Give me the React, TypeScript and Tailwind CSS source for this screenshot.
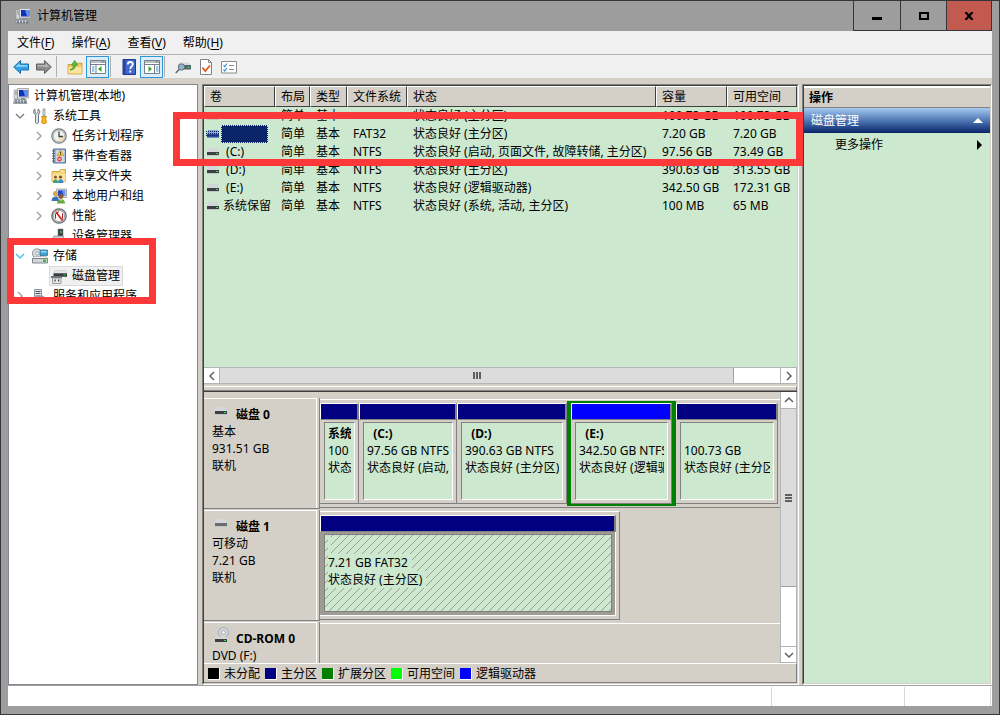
import { ReactNode } from "react";

type IconProps = {
  className?: string;
};

const ComputerIcon = ({ className = "w-4 h-4" }: IconProps) => (
  <svg viewBox="0 0 16 16" className={className} aria-hidden="true">
    <path d="M1 2h4v9H1z" fill="#d5d8dc" stroke="#8d949c" strokeWidth=".6" />
    <path d="M2 4h2M2 6h2" stroke="#6e757d" strokeWidth=".8" />
    <path d="M4.500 .5h11v9.500h-11z" fill="#e4e2dc" stroke="#9a9a94" strokeWidth=".8" />
    <path d="M6 2h8.500v6.500H6z" fill="#1330b8" />
    <path d="M10 2h4.500v6.500H12z" fill="#5d8df0" />
    <path d="M8 10h4v1.500H8z" fill="#8a8d90" />
    <path d="M1.500 11.500h11.500l1 4H.5z" fill="#c7ccd2" stroke="#7d858e" strokeWidth=".7" />
    <path d="M2 13h11M2 14.500h11" stroke="#56606a" strokeWidth=".9" strokeDasharray="2 1" />
  </svg>
);

const ToolsIcon = ({ className = "w-4 h-4" }: IconProps) => (
  <svg viewBox="0 0 16 16" className={className} aria-hidden="true">
    <path d="M3 1v3.500l1.500 1 1.500-1V1c1.500.8 2 2 1.700 3.500L6.500 7v7.500c-.5 1.200-2.500 1.200-3 0V7L1.700 4.800C1.300 3 1.800 1.700 3 1z" fill="#dfe3e6" stroke="#626a72" strokeWidth=".9" />
    <path d="M11 1h2v7h-2z" fill="#d9dde0" stroke="#7e868d" strokeWidth=".7" />
    <path d="M9.500 8.500h5l-.8 2 .8 4c-.8 1.500-4.200 1.500-5 0l.8-4z" fill="#f8b41c" stroke="#c9820a" strokeWidth=".8" />
  </svg>
);

const ClockIcon = ({ className = "w-4 h-4" }: IconProps) => (
  <svg viewBox="0 0 16 16" className={className} aria-hidden="true">
    <circle cx="8" cy="8" r="7.200" fill="#c9cdd0" stroke="#7b8185" strokeWidth="1.200" />
    <circle cx="8" cy="8" r="5.600" fill="#f3f3ee" stroke="#a7abad" strokeWidth=".6" />
    <path d="M8 8h5.500A5.500 5.500 0 0 1 8 13.500z" fill="#f1dfae" />
    <path d="M8 3.500V8.500h4" fill="none" stroke="#40464b" strokeWidth="1.300" />
  </svg>
);

const EventIcon = ({ className = "w-4 h-4" }: IconProps) => (
  <svg viewBox="0 0 16 16" className={className} aria-hidden="true">
    <path d="M2.500 1h12v14h-12z" fill="#9db4d8" stroke="#4b648f" strokeWidth=".9" />
    <path d="M5 2h8.500v12H5z" fill="#c9d7ea" />
    <path d="M1 3h3M1 5.500h3M1 8h3M1 10.500h3M1 13h3" stroke="#58636f" />
    <path d="M9.500 2l3.300 5.500H6.200z" fill="#ffd21e" stroke="#bb8c00" strokeWidth=".6" />
    <path d="M9.500 3.800v2M9.500 6.300v.7" stroke="#333" strokeWidth=".9" />
    <circle cx="8.500" cy="11" r="2.700" fill="#db3a2d" stroke="#fff" strokeWidth=".5" />
    <path d="M7.500 10l2 2M9.500 10l-2 2" stroke="#fff" strokeWidth=".8" />
  </svg>
);

const SharedFolderIcon = ({ className = "w-4 h-4" }: IconProps) => (
  <svg viewBox="0 0 16 16" className={className} aria-hidden="true">
    <path d="M1 3.500h7l1.500-2h5v12H1z" fill="#f1cf6a" stroke="#c39a34" strokeWidth=".8" />
    <path d="M9.500 3h4" stroke="#fff6cf" />
    <path d="M1.500 5.500h13v8h-13z" fill="#fae39a" />
    <circle cx="4.500" cy="9" r="1.600" fill="#8a5a33" />
    <path d="M2 15c0-5 5-5 5 0z" fill="#3aa17b" />
    <circle cx="9.500" cy="9" r="1.600" fill="#7a4d2b" />
    <path d="M7 15c0-5 5.500-5 5.500 0z" fill="#3b87c8" />
  </svg>
);

const UsersIcon = ({ className = "w-4 h-4" }: IconProps) => (
  <svg viewBox="0 0 16 16" className={className} aria-hidden="true">
    <path d="M5.500 1h10v8.500h-10z" fill="#dedfe0" stroke="#8f9498" strokeWidth=".7" />
    <path d="M7 2.300h7.200v5.700H7z" fill="#2348cf" />
    <path d="M11 2.300h3.200v5.700h-1.500z" fill="#6f9cf3" />
    <circle cx="4.500" cy="5.500" r="2.600" fill="#d9a94a" />
    <path d="M.5 13c0-6 7.500-6 7.500 0z" fill="#3c73b9" />
    <circle cx="10" cy="8.500" r="2.400" fill="#8a5c35" />
    <path d="M6 15.500c0-6 8-6 8 0z" fill="#69a743" />
    <path d="M9.200 11.300l.9 2 .9-2z" fill="#fff" />
  </svg>
);

const PerformanceIcon = ({ className = "w-4 h-4" }: IconProps) => (
  <svg viewBox="0 0 16 16" className={className} aria-hidden="true">
    <circle cx="8" cy="8" r="7.200" fill="#bfc3c5" stroke="#65696c" strokeWidth="1.200" />
    <circle cx="8" cy="8" r="5.500" fill="#fff" stroke="#8b8f92" strokeWidth=".7" />
    <path d="M4.500 10.500V6L8 3.500M11.500 5.500v5" stroke="#9b2020" fill="none" />
    <path d="M5 4l6.500 8.500" stroke="#d8201b" strokeWidth="1.700" />
  </svg>
);

const DeviceIcon = ({ className = "w-4 h-4" }: IconProps) => (
  <svg viewBox="0 0 16 16" className={className} aria-hidden="true">
    <path d="M7 1h5v8H7z" fill="#3d4145" stroke="#777c80" strokeWidth=".6" />
    <path d="M9 3h1.500v2H9z" fill="#45d245" />
    <path d="M3 8h9l2 4H1z" fill="#cbd0d4" stroke="#7c8388" strokeWidth=".7" />
    <path d="M1 12h13v2.500H1z" fill="#5d6368" />
  </svg>
);

const StorageIcon = ({ className = "w-4 h-4" }: IconProps) => (
  <svg viewBox="0 0 16 16" className={className} aria-hidden="true">
    <circle cx="5" cy="5.500" r="4.700" fill="#d4dade" stroke="#7c8489" strokeWidth=".8" />
    <circle cx="5" cy="5.500" r="1.500" fill="#fff" stroke="#858d91" strokeWidth=".7" />
    <path d="M8 2h7.500v5.500H8z" fill="#3f9fcd" stroke="#286f95" strokeWidth=".7" />
    <path d="M9 3h5.500v1.500H9z" fill="#9bdcf5" />
    <path d="M2 8.500h12.500l1 2H.7z" fill="#f1f3f4" stroke="#90979c" strokeWidth=".5" />
    <path d="M.5 10.500h15v4.500H.5z" fill="#d3d6d9" stroke="#6b7176" strokeWidth=".8" />
    <path d="M11 11.500h3v2.500h-3z" fill="#26cc2c" />
  </svg>
);

const DiskManageIcon = ({ className = "w-4 h-4" }: IconProps) => (
  <svg viewBox="0 0 16 16" className={className} aria-hidden="true">
    <path d="M4 2.500h11l1 3H2.500z" fill="#e2e4e6" stroke="#aeb2b5" strokeWidth=".4" />
    <path d="M2.500 5.300H16v3.500H2.500z" fill="#383c3f" />
    <path d="M12.500 6.500h2v1h-2z" fill="#36dc45" />
    <path d="M0 8h11v2H0z" fill="#6d7276" />
    <path d="M1.500 10h8.500v5.500H1.500z" fill="#e7e9ea" stroke="#84898d" strokeWidth=".8" />
    <path d="M3.500 11.500h1.200v2H3.500zM7 11.500h1.200v2H7z" fill="#35393c" />
  </svg>
);

const ServicesIcon = ({ className = "w-4 h-4" }: IconProps) => (
  <svg viewBox="0 0 16 16" className={className} aria-hidden="true">
    <path d="M2.500 1.500h7v13h-7z" fill="#dfe3e7" stroke="#79838c" strokeWidth=".8" />
    <path d="M3.500 3.500h5M3.500 5.500h5M3.500 8h5" stroke="#4f5c68" />
    <circle cx="10" cy="11" r="3" fill="#a9b7c4" stroke="#5f6f7e" strokeDasharray="1 1" />
    <circle cx="13" cy="13" r="2" fill="#8fa1b1" stroke="#54636f" strokeDasharray="1 1" />
  </svg>
);

type DriveProps = {
  light?: boolean;
  selected?: boolean;
};

const DriveIcon = ({ light = true, selected = false }: DriveProps) => (
  <svg viewBox="0 0 14 8" className="w-[14px] h-2 shrink-0" aria-hidden="true">
    <path d="M2 0h10l1 4H1z" fill={selected ? "#8ea7d0" : "#d3d6da"} />
    <path d="M1 4h12v3H1z" fill={selected ? "#28498f" : light ? "#3c4043" : "#6a6d70"} />
    <path d="M1 7h12v1H1z" fill={selected ? "#7590c4" : "#c2c5c7"} />
    {light && !selected && <path d="M10 5h2v1h-2z" fill="#2ee63f" />}
    {selected && <path d="M0 1.500h14M0 3.500h14M0 5.500h14" stroke="#0a246a" strokeDasharray="1 1" />}
  </svg>
);

const CdIcon = () => (
  <svg viewBox="0 0 16 16" className="w-4 h-4 shrink-0" aria-hidden="true">
    <circle cx="9.500" cy="5.500" r="5" fill="#d4d7d9" stroke="#989ea1" strokeWidth=".8" />
    <circle cx="9.500" cy="5.500" r="2" fill="#f3f3f3" stroke="#9ba0a3" strokeWidth=".8" />
    <path d="M2.500 9.500H12l1 2.500H1z" fill="#d4d6d8" />
    <path d="M1 12h12v3H1z" fill="#3c4043" />
    <path d="M10 13h2v1h-2z" fill="#2ee63f" />
  </svg>
);

type ChevronProps = {
  direction: "up" | "down" | "left" | "right";
  className?: string;
};

const Chevron = ({ direction, className = "text-[#606060]" }: ChevronProps) => {
  const paths = {
    up: "M1 7l4-4 4 4",
    down: "M1 3l4 4 4-4",
    left: "M7 1L3 5l4 4",
    right: "M3 1l4 4-4 4",
  };

  return (
    <svg viewBox="0 0 10 10" className={`w-[10px] h-[10px] ${className}`} aria-hidden="true">
      <path d={paths[direction]} fill="none" stroke="currentColor" strokeWidth="1.500" />
    </svg>
  );
};

type TreeNode = {
  label: string;
  icon: ReactNode;
  level: number;
  state?: "open" | "closed";
  highlight?: boolean;
  selected?: boolean;
};

const treeNodes: TreeNode[] = [
  { label: "系统工具", icon: <ToolsIcon />, level: 0, state: "open" },
  { label: "任务计划程序", icon: <ClockIcon />, level: 1, state: "closed" },
  { label: "事件查看器", icon: <EventIcon />, level: 1, state: "closed" },
  { label: "共享文件夹", icon: <SharedFolderIcon />, level: 1, state: "closed" },
  { label: "本地用户和组", icon: <UsersIcon />, level: 1, state: "closed" },
  { label: "性能", icon: <PerformanceIcon />, level: 1, state: "closed" },
  { label: "设备管理器", icon: <DeviceIcon />, level: 1 },
  { label: "存储", icon: <StorageIcon />, level: 0, state: "open", highlight: true },
  { label: "磁盘管理", icon: <DiskManageIcon />, level: 1, selected: true },
  { label: "服务和应用程序", icon: <ServicesIcon />, level: 0, state: "closed" },
];

const volumes = [
  { name: "", fs: "", status: "状态良好 (主分区)", size: "100.73 GB", free: "100.73 GB" },
  { name: "", fs: "FAT32", status: "状态良好 (主分区)", size: "7.20 GB", free: "7.20 GB", selected: true },
  { name: "\u00a0(C:)", fs: "NTFS", status: "状态良好 (启动, 页面文件, 故障转储, 主分区)", size: "97.56 GB", free: "73.49 GB" },
  { name: "\u00a0(D:)", fs: "NTFS", status: "状态良好 (主分区)", size: "390.63 GB", free: "313.55 GB" },
  { name: "\u00a0(E:)", fs: "NTFS", status: "状态良好 (逻辑驱动器)", size: "342.50 GB", free: "172.31 GB" },
  { name: "系统保留", fs: "NTFS", status: "状态良好 (系统, 活动, 主分区)", size: "100 MB", free: "65 MB" },
];

const columns = [
  { label: "卷", width: "w-[71px]" },
  { label: "布局", width: "w-[35px]" },
  { label: "类型", width: "w-[37px]" },
  { label: "文件系统", width: "w-[60px]" },
  { label: "状态", width: "" },
  { label: "容量", width: "w-[71px]" },
  { label: "可用空间", width: "w-[70px]" },
];

const legend = [
  { label: "未分配", color: "bg-black" },
  { label: "主分区", color: "bg-[#000080]" },
  { label: "扩展分区", color: "bg-[#008000]" },
  { label: "可用空间", color: "bg-[#00ff00]" },
  { label: "逻辑驱动器", color: "bg-[#0000ff]" },
];

const TitleBar = () => (
  <header className="flex h-[30px] shrink-0 items-stretch pl-[14px]">
    <div className="flex flex-1 items-center gap-[6px]">
      <ComputerIcon />
      <h1>计算机管理</h1>
    </div>
    <div className="mr-[7px] flex border-b border-[#36363a]">
      <button type="button" aria-label="最小化" className="flex w-[47px] items-center justify-center border-l border-[#36363a]">
        <span className="mt-[5px] h-[3px] w-[10px] bg-black" />
      </button>
      <button type="button" aria-label="最大化" className="flex w-[46px] items-center justify-center border-l border-[#36363a]">
        <span className="h-2 w-[10px] border-2 border-black" />
      </button>
      <button type="button" aria-label="关闭" className="flex w-[46px] items-center justify-center border-x border-[#36363a] bg-[#c35a4f]">
        <svg viewBox="0 0 10 8" className="h-2 w-[10px]" aria-hidden="true">
          <path d="M1.500 0l7 8M8.500 0l-7 8" stroke="#000" strokeWidth="2.200" />
        </svg>
      </button>
    </div>
  </header>
);

const MenuBar = () => {
  const menus = [
    { label: "文件", key: "F" },
    { label: "操作", key: "A" },
    { label: "查看", key: "V" },
    { label: "帮助", key: "H" },
  ];

  return (
    <nav className="flex h-6 shrink-0 items-center gap-[17px] border-b border-[#b4b4b4] bg-[#f0f0f0] pl-[9px]">
      {menus.map((menu) => (
        <button key={menu.key} type="button">
          {menu.label}(<u className="underline-offset-2">{menu.key}</u>)
        </button>
      ))}
    </nav>
  );
};

type ToolButtonProps = {
  label: string;
  active?: boolean;
  children: ReactNode;
};

const ToolButton = ({ label, active = false, children }: ToolButtonProps) => (
  <button
    type="button"
    aria-label={label}
    className={`flex h-[22px] w-[23px] items-center justify-center border ${active ? "border-[#3096d6] bg-[#dcecf8]" : "border-transparent"}`}
  >
    <svg viewBox="0 0 16 16" className="h-4 w-4 shrink-0" aria-hidden="true">{children}</svg>
  </button>
);

const ToolSeparator = () => <span className="ml-px h-[21px] w-[7px] border-l border-[#b0b0b0]" />;

const ToolBar = () => (
  <div className="flex h-[23px] shrink-0 items-center bg-[#f0f0f0] pl-px">
    <ToolButton label="后退">
      <path d="M.7 8L7.500 1.500V5h8v6h-8v3.500z" fill="#2fa3e6" stroke="#1b6da8" />
      <path d="M2.500 8L6.500 4v2h8v1.500z" fill="#8fd5fa" />
    </ToolButton>
    <ToolButton label="前进">
      <path d="M15.300 8L8.500 1.500V5h-8v6h8v3.500z" fill="#8c8c8c" stroke="#5f5f5f" />
      <path d="M13.500 8L9.500 4v2h-8v1.500z" fill="#b5b5b5" />
    </ToolButton>
    <ToolSeparator />
    <ToolButton label="向上">
      <path d="M1 5.500h8.500l1-1.500h4.500v11H1z" fill="#efc762" stroke="#c79a36" strokeWidth=".8" />
      <path d="M1.500 8h13v6.500h-13z" fill="#fbe39b" />
      <path d="M3 11c4 0 5.500-2.500 5.500-5h2L7.800 1.500 4.500 6h2c0 2-1 4-3.500 5z" fill="#56c53a" stroke="#2d8c1c" strokeWidth=".7" />
    </ToolButton>
    <ToolButton label="显示/隐藏控制台树" active>
      <path d="M.5 1.500h15v13H.5z" fill="#fff" stroke="#74808c" />
      <path d="M1 3h14M1 5.500h14" stroke="#74808c" />
      <path d="M6 6v8M11.500 3h3" stroke="#74808c" />
      <path d="M2 8h2.500M2 10h2.500M2 12h2.500" stroke="#4b8ed4" />
      <path d="M11.500 7v6L8 10z" fill="#3aa52a" />
    </ToolButton>
    <ToolSeparator />
    <ToolButton label="帮助">
      <path d="M2 .5h12.500v15H2z" fill="#4169cd" stroke="#20398a" />
      <path d="M2 1h2.500v14H2z" fill="#284496" />
      <path d="M6.800 5.500c0-3.400 5-3.200 5-.3 0 2-2.500 2.200-2.500 4.800M9.300 11.500v2" fill="none" stroke="#fff" strokeWidth="1.800" />
    </ToolButton>
    <ToolButton label="显示/隐藏操作窗格" active>
      <path d="M.5 1.500h15v13H.5z" fill="#fff" stroke="#74808c" />
      <path d="M1 3h14M1 5.500h14" stroke="#74808c" />
      <path d="M10.500 6v8M11.500 3h3" stroke="#74808c" />
      <path d="M12 8h2.500M12 10h2.500M12 12h2.500" stroke="#4b8ed4" />
      <path d="M4.500 7v6L8 10z" fill="#3aa52a" />
    </ToolButton>
    <ToolSeparator />
    <ToolButton label="磁盘属性">
      <path d="M4 3.500h10l1.500 2.500H3z" fill="#d8dadd" />
      <path d="M4 6h12v4.500H5z" fill="#53636e" />
      <path d="M12.500 7.500h2V9h-2z" fill="#22e235" />
      <circle cx="6.500" cy="8" r="3.200" fill="#8fb5ca" stroke="#5f6f7a" />
      <path d="M4 10.500L.8 14" stroke="#66737d" strokeWidth="1.800" />
    </ToolButton>
    <ToolButton label="检查">
      <path d="M2.500.5h8l3 3v12h-11z" fill="#fff" stroke="#828282" />
      <path d="M10.500.5v3h3" fill="none" stroke="#828282" />
      <path d="M4.500 8.500l2.800 3.500L12 6.500" fill="none" stroke="#e85520" strokeWidth="1.800" />
    </ToolButton>
    <ToolButton label="列表">
      <path d="M.5 2.500h15v11.500H.5z" fill="#fff" stroke="#8a8a8a" />
      <path d="M2.500 6l1.200 1.500L6 4.500M2.500 10.500L3.700 12 6 9" fill="none" stroke="#3589d6" strokeWidth="1.200" />
      <path d="M8 6.500h5M8 10.500h5" stroke="#8a8a8a" />
    </ToolButton>
  </div>
);

const ConsoleTree = () => (
  <aside className="w-[190px] shrink-0 overflow-hidden border border-[#828790] bg-white">
    <ul className="pt-px">
      <li className="flex h-5 items-center gap-[5px] pl-1">
        <ComputerIcon />
        <span>计算机管理(本地)</span>
      </li>
      {treeNodes.map((node) => (
        <li key={node.label} className={`flex h-5 items-center ${node.level === 0 ? "pl-[6px]" : "pl-[25px]"}`}>
          <span className="flex w-[15px] items-center">
            {node.state && (
              <button type="button" aria-label={node.label}>
                <Chevron
                  direction={node.state === "open" ? "down" : "right"}
                  className={node.highlight ? "text-[#4cc4f0]" : node.state === "open" ? "text-[#808080]" : "text-[#a6a6a6]"}
                />
              </button>
            )}
          </span>
          <span
            className={`flex h-5 items-center gap-[5px] border pr-[2px] pl-px ${node.selected ? "border-[#d9d9d9] bg-[#f0f0f0]" : "border-transparent"}`}
          >
            {node.icon}
            <span>{node.label}</span>
          </span>
        </li>
      ))}
    </ul>
  </aside>
);

const VolumeTable = () => (
  <div className="min-h-0 flex-1 overflow-hidden bg-[#cce8cf]">
    <table className="w-full table-fixed border-separate border-spacing-0">
      <thead>
        <tr>
          {columns.map((column) => (
            <th
              key={column.label}
              className={`h-[21px] border-t border-r border-b border-l border-t-white border-r-[#404040] border-b-[#404040] border-l-white bg-[#d4d0c8] p-0 pl-[5px] text-left font-normal whitespace-nowrap ${column.width}`}
            >
              {column.label}
            </th>
          ))}
        </tr>
      </thead>
      <tbody className="whitespace-nowrap">
        {volumes.map((volume, index) => (
          <tr key={index} className="h-[18px]">
            <td className="p-0 pl-[2px]">
              <span className="flex h-[18px] items-center gap-px">
                <DriveIcon selected={volume.selected} />
                {volume.selected ? (
                  <span className="h-[18px] w-[47px] border border-dotted border-[#f5db95] bg-[#0a246a]" />
                ) : (
                  <span className="pl-[2px]">{volume.name}</span>
                )}
              </span>
            </td>
            <td className="p-0 pl-[6px]">简单</td>
            <td className="p-0 pl-[6px]">基本</td>
            <td className="p-0 pl-[6px]">{volume.fs}</td>
            <td className="overflow-hidden p-0 pl-[6px]">{volume.status}</td>
            <td className="p-0 pl-[6px]">{volume.size}</td>
            <td className="p-0 pl-[6px]">{volume.free}</td>
          </tr>
        ))}
      </tbody>
    </table>
  </div>
);

const HorizontalScroll = () => (
  <div className="flex h-[17px] shrink-0 border-y border-[#b4b4b4] bg-white">
    <button type="button" aria-label="向左滚动" className="flex w-4 items-center justify-center border-r border-[#b4b4b4]">
      <Chevron direction="left" />
    </button>
    <div className="flex flex-[515] items-center justify-center gap-px border-r border-[#a0a0a0] bg-[#dcdcdc]">
      <span className="h-[7px] w-[2px] bg-[#606060]" />
      <span className="h-[7px] w-[2px] bg-[#606060]" />
      <span className="h-[7px] w-[2px] bg-[#606060]" />
    </div>
    <div className="flex-[46]" />
    <button type="button" aria-label="向右滚动" className="flex w-[17px] items-center justify-center border-x border-[#b4b4b4]">
      <Chevron direction="right" />
    </button>
  </div>
);

const VerticalScroll = () => (
  <div className="flex w-[17px] shrink-0 flex-col border-x border-[#b4b4b4] bg-white">
    <button type="button" aria-label="向上滚动" className="flex h-[17px] items-center justify-center border-b border-[#b4b4b4]">
      <Chevron direction="up" />
    </button>
    <div className="flex flex-[178] flex-col items-center justify-center gap-px border-b border-[#a0a0a0] bg-[#dcdcdc]">
      <span className="h-[2px] w-[7px] bg-[#606060]" />
      <span className="h-[2px] w-[7px] bg-[#606060]" />
      <span className="h-[2px] w-[7px] bg-[#606060]" />
    </div>
    <div className="flex-[59]" />
    <button type="button" aria-label="向下滚动" className="flex h-[17px] items-center justify-center border-y border-[#b4b4b4]">
      <Chevron direction="down" />
    </button>
  </div>
);

const Hatching = () => (
  <svg className="absolute inset-0 h-full w-full" aria-hidden="true">
    <defs>
      <pattern id="hatch" width="8" height="8" patternUnits="userSpaceOnUse">
        <path
          d="M0 7h1v1H0zM1 6h1v1H1zM2 5h1v1H2zM3 4h1v1H3zM4 3h1v1H4zM5 2h1v1H5zM6 1h1v1H6zM7 0h1v1H7z"
          fill="#9d9d95"
          shapeRendering="crispEdges"
        />
      </pattern>
    </defs>
    <rect width="100%" height="100%" fill="url(#hatch)" />
  </svg>
);

type PartitionProps = {
  grow: string;
  title?: string;
  size: string;
  status: string;
  logical?: boolean;
  hatched?: boolean;
};

const Partition = ({ grow, title = "\u00a0", size, status, logical = false, hatched = false }: PartitionProps) => (
  <div className={`min-w-0 ${grow}`}>
    <div className={`py-[2px] ${logical ? "bg-[#008000] px-1" : ""}`}>
      <div
        className={`h-[17px] border-t border-r-2 border-b border-l border-t-white border-r-[#808080] border-b-[#808080] border-l-white ${logical ? "bg-[#0000ff]" : "bg-[#000080]"}`}
      />
      <div
        className={`flex h-[84px] border-r border-b pt-[2px] pr-[3px] pb-[3px] pl-1 ${hatched ? "border-white bg-[#9d9b93]" : "border-[#808080] bg-[#d4d0c8]"}`}
      >
        <div
          className={`relative min-w-0 flex-1 overflow-hidden border bg-[#cce8cf] pt-[2px] pr-[3px] pl-[3px] ${hatched ? "border-[#808080]" : "border-t-[#808080] border-r-white border-b-white border-l-[#808080]"}`}
        >
          {hatched && <Hatching />}
          <div className="relative overflow-hidden leading-[17px] whitespace-nowrap">
            <p><b className="bg-[#cce8cf]">{title}</b></p>
            <p><span className="bg-[#cce8cf] pr-1">{size}</span></p>
            <p><span className="bg-[#cce8cf] pr-1">{status}</span></p>
          </div>
        </div>
      </div>
    </div>
  </div>
);

type DiskRowProps = {
  icon: ReactNode;
  name: string;
  lines: string[];
  children?: ReactNode;
};

const DiskRow = ({ icon, name, lines, children }: DiskRowProps) => (
  <div className="flex h-28 shrink-0">
    <div className="flex h-[111px] w-[116px] shrink-0 border-r border-b border-[#808080] pr-[2px]">
      <div className="flex-1 border-t border-r border-white pt-[7px] pl-2 leading-[17px]">
        <div className="flex">
          <span className="flex h-[10px] w-6 items-center pl-[2px]">{icon}</span>
          <b>{name}</b>
        </div>
        {lines.map((line) => (
          <p key={line}>{line}</p>
        ))}
      </div>
    </div>
    {children}
  </div>
);

const DiskView = () => (
  <div className="flex h-[271px] shrink-0">
    <div className="flex min-w-0 flex-1 flex-col overflow-hidden pt-[6px]">
      <DiskRow icon={<DriveIcon />} name="磁盘 0" lines={["基本", "931.51 GB", "联机"]}>
        <div className="mt-px flex h-[109px] min-w-0 flex-1 items-start border-t border-b border-t-white border-b-[#808080] pt-px pr-[2px]">
          <Partition grow="flex-[39]" title="系统保留" size="100 MB" status="状态良好" />
          <Partition grow="flex-[98]" title={"\u00a0\u00a0(C:)"} size="97.56 GB NTFS" status="状态良好 (启动, 页" />
          <Partition grow="flex-[110]" title={"\u00a0\u00a0(D:)"} size="390.63 GB NTFS" status="状态良好 (主分区)" />
          <Partition grow="flex-[109]" title={"\u00a0\u00a0(E:)"} size="342.50 GB NTFS" status="状态良好 (逻辑驱" logical />
          <Partition grow="flex-[102]" size="100.73 GB" status="状态良好 (主分区)" />
        </div>
      </DiskRow>
      <DiskRow icon={<DriveIcon light={false} />} name="磁盘 1" lines={["可移动", "7.21 GB", "联机"]}>
        <div className="mt-px flex h-[109px] w-[300px] min-w-0 items-start border-t border-r border-b border-t-white border-r-[#808080] border-b-[#808080] pt-px pr-[3px]">
          <Partition grow="flex-1" size="7.21 GB FAT32" status="状态良好 (主分区)" hatched />
        </div>
      </DiskRow>
      <DiskRow icon={<CdIcon />} name="CD-ROM 0" lines={["DVD (F:)"]}>
        <div className="mt-px flex-1 border-t border-white" />
      </DiskRow>
    </div>
    <VerticalScroll />
  </div>
);

const Legend = () => (
  <div className="flex h-5 shrink-0 items-center gap-[5px] border-t border-r border-b border-t-white border-r-[#808080] border-b-[#808080] pt-px pl-1">
    {legend.map((item) => (
      <span key={item.label} className="flex items-center gap-1">
        <span className={`h-3 w-3 border-r border-b border-white ${item.color}`} />
        {item.label}
      </span>
    ))}
  </div>
);

const DiskManagement = () => (
  <main className="flex min-w-0 flex-1 flex-col border border-t-[#808080] border-r-white border-b-white border-l-[#808080]">
    <div className="flex min-h-0 flex-1 flex-col border border-t-[#404040] border-r-[#d4d0c8] border-b-[#d4d0c8] border-l-[#404040]">
      <VolumeTable />
      <HorizontalScroll />
      <div className="h-2 shrink-0 border-b border-[#404040] pt-[2px]">
        <div className="h-[5px] border-t border-r border-b border-t-white border-r-[#808080] border-b-[#808080]" />
      </div>
      <DiskView />
      <Legend />
    </div>
  </main>
);

const ActionsPane = () => (
  <aside className="flex w-[190px] shrink-0 border border-t-[#808080] border-r-white border-b-white border-l-[#808080]">
    <div className="flex-1 border border-t-[#404040] border-r-[#d4d0c8] border-b-[#d4d0c8] border-l-[#404040] bg-[#cce8cf]">
      <h2 className="h-[22px] border-t-2 border-b border-t-white border-b-[#808080] bg-[#d4d0c8] pl-[5px] leading-[19px] font-bold">操作</h2>
      <button
        type="button"
        className="flex h-[25px] w-full items-center justify-between bg-linear-to-b from-[#a6caf0] via-[#5078b4] to-[#0a246a] pr-[7px] pl-[7px] text-white"
      >
        磁盘管理
        <svg viewBox="0 0 10 5" className="h-[5px] w-[10px]" aria-hidden="true">
          <path d="M5 0l5 5H0z" fill="#fff" />
        </svg>
      </button>
      <button type="button" className="flex h-6 w-full items-center justify-between pr-2 pl-[31px]">
        更多操作
        <svg viewBox="0 0 5 10" className="h-[10px] w-[5px]" aria-hidden="true">
          <path d="M0 0l5 5-5 5z" fill="#000" />
        </svg>
      </button>
    </div>
  </aside>
);

const App = () => {
  return (
    <div className="relative flex h-screen flex-col overflow-hidden border border-[#36363a] bg-[#9d9d9d] font-['Noto_Sans','Noto_Sans_CJK_SC',sans-serif] text-[12px] leading-4 text-black">
      <TitleBar />
      <div className="mx-[7px] mb-2 flex min-h-0 flex-1 flex-col">
        <MenuBar />
        <ToolBar />
        <div className="flex min-h-0 flex-1 bg-[#d4d0c8] pt-[6px]">
          <ConsoleTree />
          <div className="w-1 shrink-0" />
          <DiskManagement />
          <div className="w-[3px] shrink-0" />
          <ActionsPane />
        </div>
        <footer className="flex h-[21px] shrink-0 border-t border-[#a0a0a0] bg-white pt-px pr-px">
          <div className="flex-1 border-r border-[#d7d7d7]" />
          <div className="w-[133px] border-r border-[#d7d7d7]" />
          <div className="w-[86px] border-r border-[#d7d7d7]" />
        </footer>
      </div>
      {/* red marks drawn over the window */}
      <div className="pointer-events-none absolute top-[111px] right-[196px] left-[172px] h-[54px] border-[7px] border-[#fc3838]" />
      <div className="pointer-events-none absolute top-[237px] left-[6px] h-[66px] w-[149px] border-[7px] border-[#fc3838]" />
    </div>
  );
};

export default App;
